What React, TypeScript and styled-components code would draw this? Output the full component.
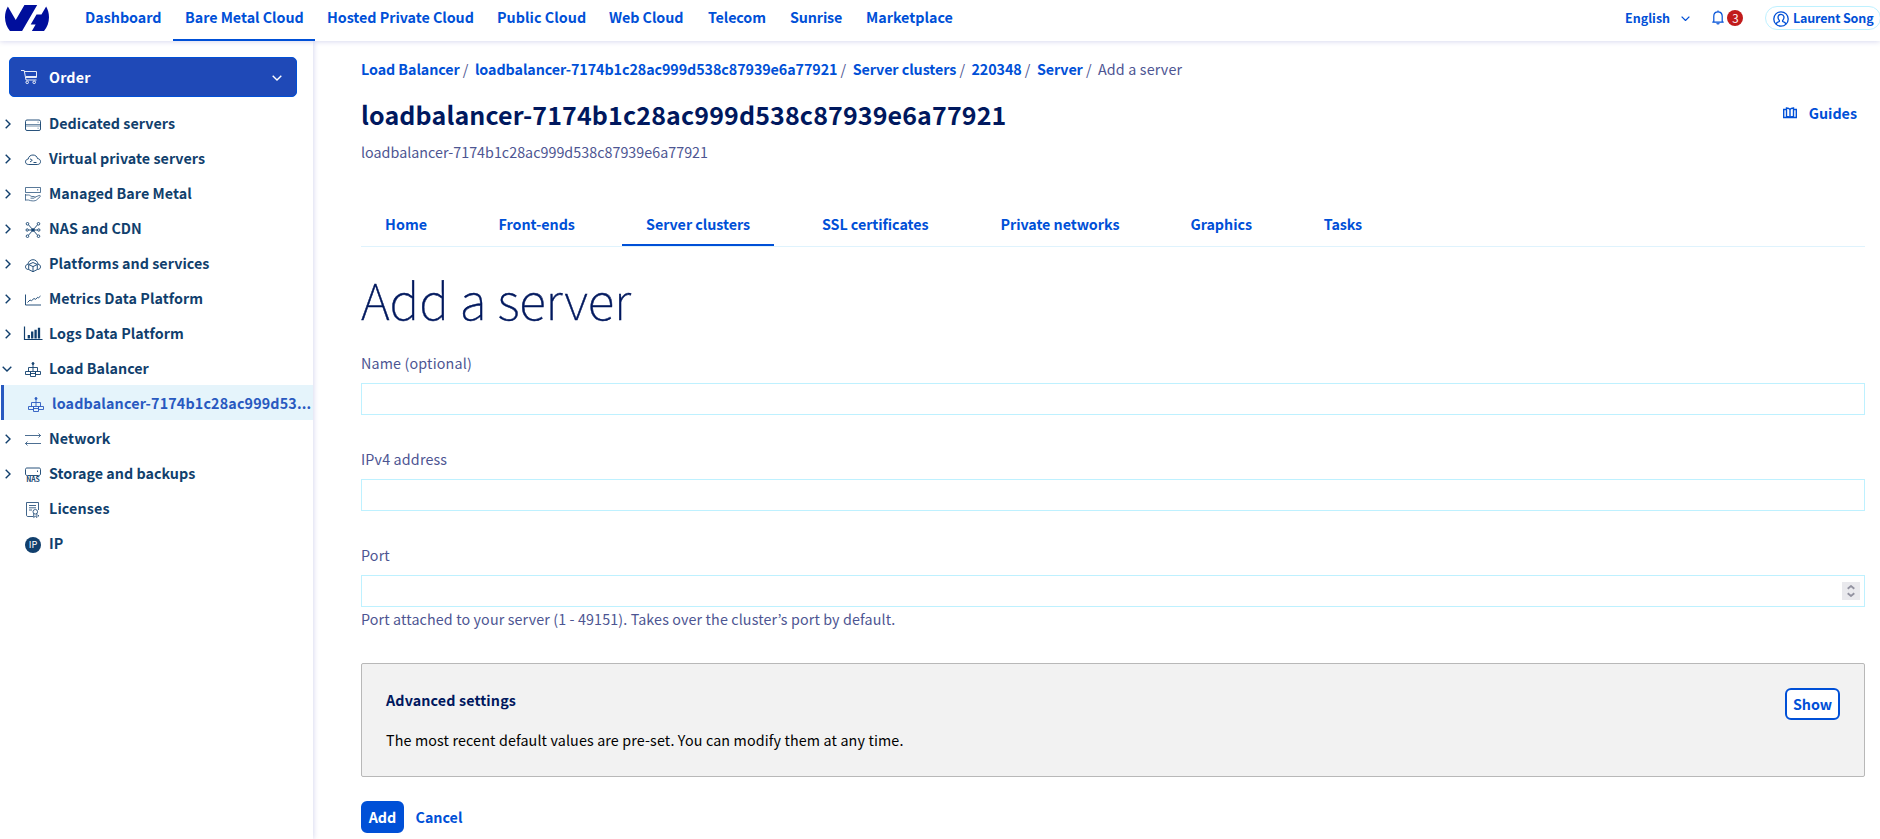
import React from 'react';
import styled, { createGlobalStyle } from 'styled-components';

const GlobalStyle = createGlobalStyle`
  *, *::before, *::after { box-sizing: border-box; }
  body {
    margin: 0;
    overflow: hidden;
    background: #fff;
    color: #4d5592;
    font: 400 14.3px/21px "Noto Sans CJK KR", "Open Sans", sans-serif;
  }
  a { color: inherit; text-decoration: none; }
`;

const Page = styled.div`
  display: flex;
  flex-direction: column;
  width: 100%;
  height: 839px;
  overflow: hidden;
`;

/* ---------- Top bar ---------- */

const TopBar = styled.header`
  position: relative;
  z-index: 2;
  display: flex;
  flex: none;
  height: 41px;
  background: #fff;
  color: #0050d7;
  box-shadow: 0 0 6px rgba(0, 14, 156, 0.2);
`;

const LogoLink = styled.a`
  display: block;
  width: 73px;
  padding: 5px 0 0 5px;

  svg { display: block; width: 44px; height: 26px; }
`;

const Universes = styled.nav`
  display: flex;
`;

const Universe = styled.a<{ $width: number; $track?: number; $active?: boolean }>`
  width: ${(p) => p.$width}px;
  padding: 6px 0 0 12px;
  border-bottom: 2px solid ${(p) => (p.$active ? '#0050d7' : 'transparent')};
  font-weight: 700;
  letter-spacing: ${(p) => p.$track ?? 0}px;
  white-space: nowrap;
`;

const Account = styled.div`
  display: flex;
  flex: none;
  align-items: flex-start;
  width: 256px;
  margin-left: auto;
  margin-right: -1px;
  font-size: 12.5px;
  line-height: 19px;
  font-weight: 700;
  white-space: nowrap;
`;

const Language = styled.a`
  display: flex;
  width: 88px;
  padding-top: 8px;

  svg { margin: 8px 0 0 11px; }
`;

const Notifications = styled.a`
  display: flex;
  width: 53px;
  padding-top: 10px;
`;

const Badge = styled.span`
  width: 16px;
  height: 16px;
  margin-left: 3px;
  border-radius: 50%;
  background: #c11b1b;
  color: #fff;
  font-size: 11.5px;
  font-weight: 400;
  line-height: 17px;
  text-align: center;
`;

const UserPill = styled.a`
  display: flex;
  flex: none;
  width: 116px;
  height: 24px;
  margin-top: 6px;
  padding: 1px 0 0 7px;
  border: 1px solid #bef1ff;
  border-radius: 12px;
  letter-spacing: -0.16px;

  svg { margin: 3px 4px 0 0; }
`;

/* ---------- Sidebar ---------- */

const Body = styled.div`
  display: flex;
  flex: 1;
  min-height: 0;
`;

const Sidebar = styled.aside`
  flex: none;
  width: 313px;
  background: #fff;
  box-shadow: 0 0 6px rgba(0, 14, 156, 0.2);
  color: #113f6d;
  font-weight: 700;
`;

const OrderButton = styled.button`
  display: flex;
  width: 288px;
  height: 40px;
  margin: 16px 0 8px 9px;
  padding: 8px 14px 0 10px;
  border: 1px solid #0050d7;
  border-radius: 5px;
  background: #1f49b7;
  color: #fff;
  font: inherit;
  letter-spacing: 0.15px;
  text-align: left;

  svg:first-child { margin: 3px 11px 0 1px; }
  svg:last-child { margin: 9px 0 0 auto; }
`;

const MenuRow = styled.a<{ $track?: number; $selected?: boolean }>`
  display: flex;
  height: 35px;
  margin-left: 1px;
  padding: 7px 0 7px ${(p) => (p.$selected ? 24 : 0)}px;
  border-left: ${(p) => (p.$selected ? '3px solid #2859c0' : '0')};
  background: ${(p) => (p.$selected ? '#e5f4fb' : 'transparent')};
  color: ${(p) => (p.$selected ? '#2859c0' : 'inherit')};
  letter-spacing: ${(p) => p.$track ?? 0}px;
  white-space: nowrap;
`;

const Toggle = styled.span<{ $open?: boolean }>`
  display: flex;
  width: 24px;
  height: 21px;
  align-items: center;
  padding: 2px 0 0 ${(p) => (p.$open ? 1 : 4)}px;
`;

const MenuIcon = styled.svg<{ $stroke?: number }>`
  flex: none;
  width: 16px;
  height: 16px;
  margin: 5px 8px 0 0;
  overflow: visible;
  fill: none;
  stroke: currentColor;
  stroke-width: ${(p) => p.$stroke ?? 0.9};

  text {
    stroke: none;
    fill: currentColor;
    letter-spacing: 0;
  }
`;

/* ---------- Content ---------- */

const Content = styled.main`
  flex: 1;
  min-width: 0;
  padding: 17px 15px 0 48px;
`;

const Breadcrumb = styled.nav`
  display: flex;
  white-space: nowrap;
`;

const Crumb = styled.a`
  color: #0050d7;
  font-weight: 700;
  letter-spacing: -0.07px;

  &::after {
    content: "/";
    display: inline-block;
    width: 5px;
    margin: 0 7.1px 0 3.1px;
    color: #4d5592;
    font-weight: 400;
  }
`;

const CurrentCrumb = styled.span`
  letter-spacing: 0.16px;
`;

const TitleRow = styled.div`
  display: flex;
  justify-content: space-between;
  padding-top: 17px;
`;

const Title = styled.h1`
  margin: 0;
  color: #00185e;
  font-size: 25px;
  font-weight: 700;
  line-height: 36px;
  letter-spacing: 0.135px;
`;

const Guides = styled.a`
  display: flex;
  padding: 6px 8px 0 0;
  color: #0050d7;
  font-weight: 700;

  svg { margin: 5px 12px 0 0; }
`;

const Subtitle = styled.p`
  margin: 9px 0 0;
  letter-spacing: 0.025px;
`;

const Tabs = styled.nav`
  display: flex;
  gap: 24px;
  height: 36px;
  margin-top: 49px;
  border-bottom: 1px solid #dff3fd;
`;

const Tab = styled.a<{ $width: number; $active?: boolean; $track?: number }>`
  width: ${(p) => p.$width}px;
  height: 35px;
  padding: 2px 0 0 24px;
  border-bottom: 2px solid ${(p) => (p.$active ? '#0050d7' : 'transparent')};
  color: #0050d7;
  font-weight: 700;
  letter-spacing: ${(p) => p.$track ?? -0.04}px;
  white-space: nowrap;
`;

const Heading = styled.h2`
  margin: 15px 0 18px;
  color: #00185e;
  font-size: 50px;
  font-weight: 100;
  line-height: 72px;
  letter-spacing: -0.1px;
  -webkit-text-stroke: 0.45px #00185e;
`;

const Field = styled.div`
  height: 96px;
`;

const Label = styled.label`
  display: block;
  margin-bottom: 10px;
  letter-spacing: 0.16px;
`;

const InputBox = styled.div`
  display: flex;
  align-items: center;
  justify-content: flex-end;
  height: 32px;
  padding-right: 4px;
  border: 1px solid #bef1ff;
  background: #fff;
`;

const Stepper = styled.span`
  display: flex;
  align-items: center;
  justify-content: center;
  width: 18px;
  height: 18px;
  background: #e9e9ed;
`;

const Hint = styled.p`
  margin: 1px 0 0;
  letter-spacing: 0.125px;
`;

const Advanced = styled.section`
  display: flex;
  justify-content: space-between;
  height: 114px;
  margin-top: 23px;
  padding: 24px;
  border: 1px solid #b8b8b8;
  border-radius: 2px;
  background: #f2f2f2;
  color: #000;
`;

const AdvancedTitle = styled.h3`
  margin: 1px 0 19px;
  color: #00185e;
  font-size: inherit;
  font-weight: 700;
  letter-spacing: 0.13px;
`;

const AdvancedText = styled.p`
  margin: 0;
  letter-spacing: 0.135px;
`;

const Button = styled.button<{ $kind: 'primary' | 'outline' | 'ghost'; $width?: number }>`
  width: ${(p) => (p.$width ? `${p.$width}px` : 'auto')};
  height: 32px;
  padding: 0 0 2px;
  border: ${(p) => (p.$kind === 'ghost' ? '0' : '2px solid #0050d7')};
  border-radius: 6px;
  background: ${(p) => ({ primary: '#0050d7', outline: '#fff', ghost: 'transparent' })[p.$kind]};
  color: ${(p) => (p.$kind === 'primary' ? '#fff' : '#0050d7')};
  font: inherit;
  font-weight: 700;
`;

const Actions = styled.div`
  display: flex;
  gap: 11.5px;
  margin-top: 24px;
`;

/* ---------- Icons ---------- */

const Chevron = ({ down, size = 1 }: { down?: boolean; size?: number }) =>
  down ? (
    <svg width={10 * size} height={6 * size} viewBox="0 0 10 6" fill="none" stroke="currentColor" strokeWidth={1.4}>
      <path d="M.7.7 5 5 9.3.7" />
    </svg>
  ) : (
    <svg width="6" height="10" viewBox="0 0 6 10" fill="none" stroke="currentColor" strokeWidth={1.4}>
      <path d="M.7.7 5 5 .7 9.3" />
    </svg>
  );

const Logo = () => (
  <svg viewBox="0 4.85 24 14.3" preserveAspectRatio="none" fill="#000e9c">
    <path d="M19.881 10.095l2.563-4.45C23.434 7.389 24 9.404 24 11.555c0 2.88-1.017 5.523-2.71 7.594h-6.62l2.04-3.541h-2.696l3.176-5.513h2.691zM17.561 4.852L9.333 19.14l.003.009H2.709C1.014 17.077 0 14.435 0 11.555c0-2.152.57-4.17 1.561-5.918l4.294 7.449 4.747-8.234z" />
  </svg>
);

const Cart = () => (
  <svg width="17" height="16" viewBox="0 0 17 16" fill="none" stroke="#fff" strokeWidth=".9">
    <path d="M0 1.500h3.200L5 11h10.500M3.400 2.500h12.100v6H4.600M5 7.500h10.300" />
    <circle cx="6.200" cy="13.300" r="1.300" />
    <circle cx="13.200" cy="13.300" r="1.300" />
  </svg>
);

const Bell = () => (
  <svg width="12" height="15" viewBox="0 0 12 15" fill="none" stroke="currentColor" strokeWidth="1.200">
    <path d="M.3 12.200h11.400M1.800 12V6.200C1.800 3.400 3.600 1.900 6 1.900s4.200 1.500 4.200 4.300V12M6 .6v1.200M4.600 13.400c.6.7 2.200.7 2.800 0" />
  </svg>
);

const UserIcon = () => (
  <svg width="16" height="16" viewBox="0 0 16 16" fill="none" stroke="currentColor" strokeWidth="1.300">
    <circle cx="8" cy="8" r="7.200" />
    <path d="M3.200 13c.3-1.400 1.300-1.900 2.800-2.300.7-.3.5-1 .1-1.500C4.300 7 4.800 3.300 8 3.300s3.700 3.700 1.900 5.900c-.4.5-.6 1.200.1 1.500 1.500.4 2.500.9 2.800 2.300" />
  </svg>
);

const GuidesIcon = () => (
  <svg width="14" height="12" viewBox="0 0 14 12" fill="none" stroke="currentColor" strokeWidth="1.400">
    <path d="M3.500 2.500H.7v8h12.600v-8h-2.800M7 10.400C5.500 9.600 4.300 9.400 3.500 9.400V1c1.500 0 2.700.4 3.500 1.500C7.800 1.400 9 1 10.500 1v8.400c-.8 0-2 .2-3.500 1zM7 2.500v7.600" />
  </svg>
);

const BalancerIcon = () => (
  <MenuIcon viewBox="0 0 16 16">
    <circle cx="8" cy="1.500" r="1" fill="currentColor" />
    <path d="M8 2v7M3.500 9.500V5.500h9v4M.5 9.500h5v3h-5zM10.500 9.500h5v3h-5zM5.500 9.500h5v5h-5zM5.500 11.500h5" />
  </MenuIcon>
);

const icons: Record<string, React.ReactNode> = {
  server: (
    <MenuIcon viewBox="0 0 16 16">
      <rect x=".5" y="3" width="15" height="10.500" rx="1.500" />
      <path d="M.5 7.500h15M.5 9h15M12.500 5.200h1.200M12.500 11.200h1.200" strokeWidth=".6" />
    </MenuIcon>
  ),
  vps: (
    <MenuIcon viewBox="0 0 16 16">
      <path d="M3.700 12.500C1.500 12.500.5 11.300.5 9.800c0-1.600 1.200-2.600 2.700-2.700C3.600 4.400 5.600 3 8 3c2.300 0 4.100 1.500 4.500 3.600 1.800.1 3 1.300 3 3 0 1.800-1.200 2.900-3.200 2.900z" />
      <path d="M5 6.800l2.300 1.500L5 10M8.500 10.500h3" />
    </MenuIcon>
  ),
  managed: (
    <MenuIcon viewBox="0 0 16 16" $stroke={0.7}>
      <path d="M.5.500h15v5H.5zM12.700 2v1.500M.5 7v6.500M.5 8h3.200c1.300 0 2 1.500 3.300 1.500h2c1.200 0 1 1.700-.2 1.700H5.500M10 10.200l4-1.700c1.200-.4 1.900.6 1 1.300L11.500 13c-1.500 1.200-4 1-6 .6L3.500 13H.5" />
    </MenuIcon>
  ),
  nas: (
    <MenuIcon viewBox="0 0 16 16">
      <path d="M3.500 2.800 8 8l4.500-5.200M3.500 13.200 8 8l4.500 5.200M3.500 8h9" />
      <circle cx="2.500" cy="1.800" r="1.300" /><circle cx="13.500" cy="1.800" r="1.300" />
      <circle cx="2.500" cy="14.200" r="1.300" /><circle cx="13.500" cy="14.200" r="1.300" />
      <circle cx="2.200" cy="8" r="1.200" /><circle cx="13.800" cy="8" r="1.200" />
      <circle cx="8" cy="8" r="1.300" fill="currentColor" />
    </MenuIcon>
  ),
  platforms: (
    <MenuIcon viewBox="0 0 16 16">
      <path d="M3.500 12.500C1.500 12.500.5 11.300.5 9.900c0-1.500 1-2.500 2.500-2.700C3.300 4.500 5.500 2.700 8 2.700s4.700 1.800 5 4.500c1.500.2 2.500 1.200 2.500 2.700 0 1.400-1 2.600-3 2.600" />
      <path d="M8 5.500l4.300 2v5L8 14.700l-4.300-2.200v-5zM3.700 7.500 8 9.600l4.300-2.100M8 9.600v5" />
    </MenuIcon>
  ),
  metrics: (
    <MenuIcon viewBox="0 0 16 16">
      <path d="M.5 2.500v10.500H16" />
      <path d="M2.500 10.500 5 8l1.500.7L9 6.500l1.500.8 2.300-2 .8.500L15.500 4" />
    </MenuIcon>
  ),
  logs: (
    <MenuIcon viewBox="0 0 16 16">
      <path d="M-.5-.5v13h18" strokeWidth="1.200" />
      <path d="M3.800 11.500V8M7.200 11.500V4.500M10.600 11.500V2.800M14 11.500V.8" strokeWidth="2.300" />
    </MenuIcon>
  ),
  balancer: <BalancerIcon />,
  network: (
    <MenuIcon viewBox="0 0 16 16" $stroke={0.75}>
      <path d="M0 3.500h15.500M13.500 1.500l2 2-2 2M16 11.500H.5M2.500 9.500l-2 2 2 2" />
    </MenuIcon>
  ),
  storage: (
    <MenuIcon viewBox="0 0 16 16">
      <path d="M2.500 8.500C1.200 8.500.5 8 .5 7V2.500C.5 1.500 1 1 2 1h12c1 0 1.500.5 1.500 1.500V7c0 1-.7 1.500-2 1.500zM12.500 3.500v1.500" />
      <text x="8" y="14.800" fontSize="6.800" fontWeight="700" textAnchor="middle">NAS</text>
    </MenuIcon>
  ),
  licenses: (
    <MenuIcon viewBox="0 0 16 16" $stroke={0.8}>
      <path d="M8 14.500H3C2 14.500 1.500 14 1.500 13V.5h12V8M13.500 13v1.500M4 3.500h7M4 5.800h7M4 8h3" />
      <circle cx="10.300" cy="9.800" r="2.300" />
      <path d="M8.700 11.500v4l1.600-1.300 1.600 1.300v-4" />
    </MenuIcon>
  ),
  ip: (
    <MenuIcon viewBox="0 0 16 16">
      <circle cx="8" cy="8" r="8" fill="currentColor" stroke="none" />
      <IpText x="8" y="11.300" textAnchor="middle">IP</IpText>
    </MenuIcon>
  ),
};

function IpText(props: React.SVGProps<SVGTextElement>) {
  return <IpGlyphs {...(props as object)} />;
}

const IpGlyphs = styled.text`
  && { fill: #fff; }
  font-size: 9.2px;
  font-weight: 400;
`;

/* ---------- Data ---------- */

const universes = [
  { label: 'Dashboard', width: 100 },
  { label: 'Bare Metal Cloud', width: 142, track: -0.024, active: true },
  { label: 'Hosted Private Cloud', width: 170, track: -0.037 },
  { label: 'Public Cloud', width: 112, track: 0.05 },
  { label: 'Web Cloud', width: 99, track: -0.06 },
  { label: 'Telecom', width: 82, track: -0.13 },
  { label: 'Sunrise', width: 76, track: -0.13 },
  { label: 'Marketplace', width: 110 },
];

type MenuItem = { label: string; icon: string; track: number; state?: 'closed' | 'open' | 'selected' };

const menu: MenuItem[] = [
  { label: 'Dedicated servers', icon: 'server', track: 0.025, state: 'closed' },
  { label: 'Virtual private servers', icon: 'vps', track: 0.032, state: 'closed' },
  { label: 'Managed Bare Metal', icon: 'managed', track: 0.035, state: 'closed' },
  { label: 'NAS and CDN', icon: 'nas', track: 0.04, state: 'closed' },
  { label: 'Platforms and services', icon: 'platforms', track: 0.035, state: 'closed' },
  { label: 'Metrics Data Platform', icon: 'metrics', track: 0.06, state: 'closed' },
  { label: 'Logs Data Platform', icon: 'logs', track: 0.05, state: 'closed' },
  { label: 'Load Balancer', icon: 'balancer', track: 0.015, state: 'open' },
  { label: 'loadbalancer-7174b1c28ac999d53...', icon: 'balancer', track: 0.16, state: 'selected' },
  { label: 'Network', icon: 'network', track: 0.1, state: 'closed' },
  { label: 'Storage and backups', icon: 'storage', track: 0.014, state: 'closed' },
  { label: 'Licenses', icon: 'licenses', track: 0.13 },
  { label: 'IP', icon: 'ip', track: 0 },
];

const crumbs = ['Load Balancer', 'loadbalancer-7174b1c28ac999d538c87939e6a77921', 'Server clusters', '220348', 'Server'];

const tabs = [
  { label: 'Home', width: 89.5, track: 0.1 },
  { label: 'Front-ends', width: 123.5 },
  { label: 'Server clusters', width: 152, active: true },
  { label: 'SSL certificates', width: 154.5, track: -0.06 },
  { label: 'Private networks', width: 166, track: -0.057 },
  { label: 'Graphics', width: 109.3 },
  { label: 'Tasks', width: 86, track: -0.18 },
];

export default function App() {
  return (
    <Page>
      <GlobalStyle />
      <TopBar>
        <LogoLink href="#"><Logo /></LogoLink>
        <Universes>
          {universes.map((u) => (
            <Universe key={u.label} href="#" $width={u.width} $track={u.track} $active={u.active}>{u.label}</Universe>
          ))}
        </Universes>
        <Account>
          <Language href="#">English<Chevron down size={0.9} /></Language>
          <Notifications href="#"><Bell /><Badge>3</Badge></Notifications>
          <UserPill href="#"><UserIcon />Laurent Song</UserPill>
        </Account>
      </TopBar>
      <Body>
        <Sidebar>
          <OrderButton><Cart />Order<Chevron down /></OrderButton>
          {menu.map((m) => (
            <MenuRow key={m.label} href="#" $track={m.track} $selected={m.state === 'selected'}>
              {m.state !== 'selected' && (
                <Toggle $open={m.state === 'open'}>{m.state && <Chevron down={m.state === 'open'} />}</Toggle>
              )}
              {icons[m.icon]}
              {m.label}
            </MenuRow>
          ))}
        </Sidebar>
        <Content>
          <Breadcrumb>
            {crumbs.map((c) => <Crumb key={c} href="#">{c}</Crumb>)}
            <CurrentCrumb>Add a server</CurrentCrumb>
          </Breadcrumb>
          <TitleRow>
            <Title>loadbalancer-7174b1c28ac999d538c87939e6a77921</Title>
            <Guides href="#"><GuidesIcon />Guides</Guides>
          </TitleRow>
          <Subtitle>loadbalancer-7174b1c28ac999d538c87939e6a77921</Subtitle>
          <Tabs>
            {tabs.map((t) => (
              <Tab key={t.label} href="#" $width={t.width} $active={t.active} $track={t.track}>{t.label}</Tab>
            ))}
          </Tabs>
          <Heading>Add a server</Heading>
          <Field><Label>Name (optional)</Label><InputBox /></Field>
          <Field><Label>IPv4 address</Label><InputBox /></Field>
          <Field>
            <Label>Port</Label>
            <InputBox>
              <Stepper>
                <svg width="8" height="12" viewBox="0 0 8 12" fill="none" stroke="#9292a0" strokeWidth="1.800">
                  <path d="M.7 3.800 4 1l3.300 2.800M.7 8.200 4 11l3.300-2.800" />
                </svg>
              </Stepper>
            </InputBox>
            <Hint>Port attached to your server (1 - 49151). Takes over the cluster’s port by default.</Hint>
          </Field>
          <Advanced>
            <div>
              <AdvancedTitle>Advanced settings</AdvancedTitle>
              <AdvancedText>The most recent default values are pre-set. You can modify them at any time.</AdvancedText>
            </div>
            <Button $kind="outline" $width={55}>Show</Button>
          </Advanced>
          <Actions>
            <Button $kind="primary" $width={43}>Add</Button>
            <Button $kind="ghost">Cancel</Button>
          </Actions>
        </Content>
      </Body>
    </Page>
  );
}
